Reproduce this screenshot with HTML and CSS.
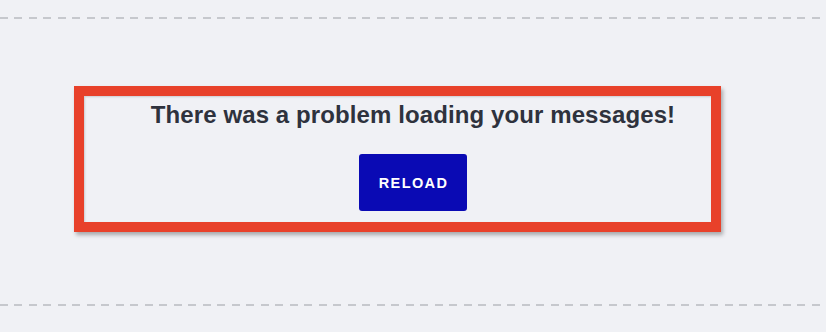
FILE: index.html
```html
<!DOCTYPE html>
<html lang="en">
<head>
<meta charset="utf-8">
<title>Messages</title>
<link rel="stylesheet" href="styles.css">
</head>
<body>
<div class="page">
  <div class="rule"></div>
  <section class="error-panel">
    <h2 class="error-title">There was a problem loading your messages!</h2>
    <button class="reload-btn" type="button">RELOAD</button>
    <div class="highlight"></div>
  </section>
  <div class="rule"></div>
</div>
</body>
</html>
```

FILE: styles.css
```css
html, body {
  margin: 0;
  padding: 0;
  background: #f0f1f5;
}

body {
  font-family: "Liberation Sans", Arial, sans-serif;
  width: 826px;
  height: 332px;
  overflow: hidden;
}

.page {
  padding-top: 17px;
}

.rule {
  height: 2px;
  background: repeating-linear-gradient(to right, #c6c8cd 0 8px, transparent 8px 14.5px);
}

.error-panel {
  position: relative;
  height: 285px;
  box-sizing: border-box;
  padding-top: 82px;
  display: flex;
  flex-direction: column;
  align-items: center;
}

.error-title {
  margin: 0;
  font-size: 24px;
  line-height: 28px;
  font-weight: 700;
  color: #2e323d;
  letter-spacing: 0.1px;
}

.reload-btn {
  margin-top: 25px;
  width: 108px;
  height: 57px;
  border: none;
  border-radius: 3px;
  background: #0a0ab4;
  color: #ffffff;
  font-family: "Liberation Sans", Arial, sans-serif;
  font-weight: 700;
  font-size: 14.5px;
  letter-spacing: 1.4px;
  padding: 0 0 0 1px;
  cursor: pointer;
}

.highlight {
  position: absolute;
  left: 74px;
  top: 67px;
  width: 647px;
  height: 146px;
  box-sizing: border-box;
  border: 10px solid #e8412a;
  box-shadow: 2px 3px 4px rgba(0, 0, 0, 0.3), inset 1px 1px 2px rgba(0, 0, 0, 0.15);
  pointer-events: none;
}
```
